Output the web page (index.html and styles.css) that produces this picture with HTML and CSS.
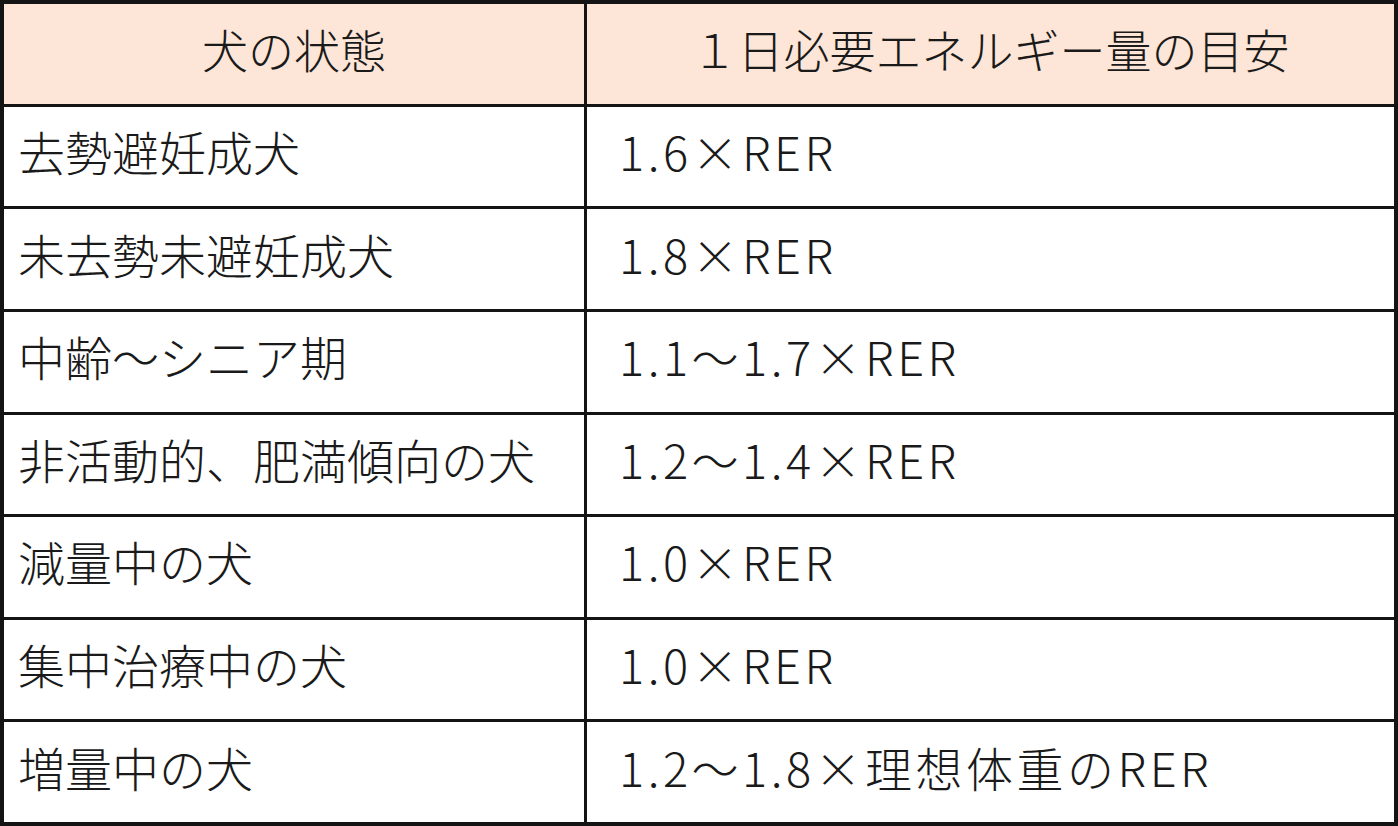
FILE: index.html
```html
<!DOCTYPE html>
<html lang="ja">
<head>
<meta charset="utf-8">
<title>犬の状態と1日必要エネルギー量の目安</title>
<link rel="stylesheet" href="styles.css">
</head>
<body>
<div class="table">
  <div class="cell head">犬の状態</div>
  <div class="cell head">１日必要エネルギー量の目安</div>
  <div class="cell name">去勢避妊成犬</div>
  <div class="cell val">1.6×RER</div>
  <div class="cell name">未去勢未避妊成犬</div>
  <div class="cell val">1.8×RER</div>
  <div class="cell name">中齢～シニア期</div>
  <div class="cell val">1.1～1.7×RER</div>
  <div class="cell name">非活動的、肥満傾向の犬</div>
  <div class="cell val">1.2～1.4×RER</div>
  <div class="cell name">減量中の犬</div>
  <div class="cell val">1.0×RER</div>
  <div class="cell name">集中治療中の犬</div>
  <div class="cell val">1.0×RER</div>
  <div class="cell name">増量中の犬</div>
  <div class="cell val">1.2～1.8×理想体重のRER</div>
</div>
</body>
</html>
```
FILE: styles.css
```css
html, body {
  margin: 0;
  padding: 0;
  background: #ffffff;
}
.table {
  box-sizing: border-box;
  width: 1398px;
  height: 826px;
  background: #141414;
  padding: 4px;
  display: grid;
  grid-template-columns: 580px 1fr;
  grid-template-rows: repeat(8, 1fr);
  gap: 3px;
  font-family: "Noto Sans CJK JP", "Noto Sans", sans-serif;
  font-size: 47px;
  font-weight: 300;
  color: #1a1a1a;
}
.cell {
  background: #ffffff;
  display: flex;
  align-items: center;
  white-space: nowrap;
  padding-bottom: 12px;
  box-sizing: border-box;
}
.head {
  background: #fde6d7;
  justify-content: center;
  font-size: 46px;
}
.name {
  padding-left: 14px;
}
.val {
  padding-left: 32px;
  letter-spacing: 3.5px;
}
```
